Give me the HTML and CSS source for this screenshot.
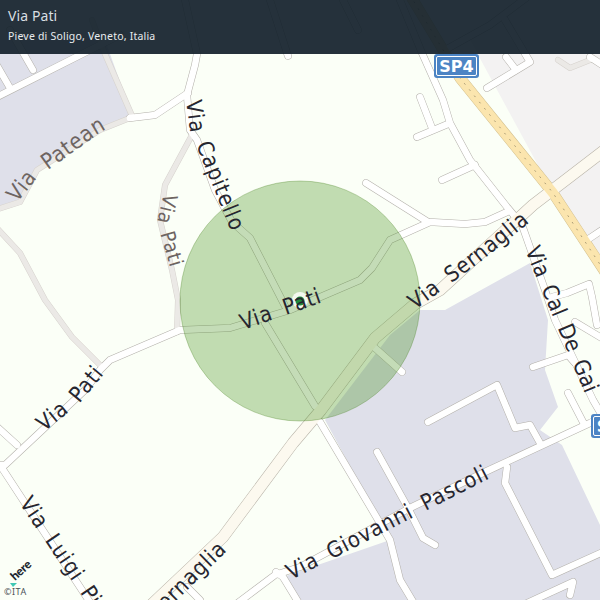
FILE: index.html
```html
<!DOCTYPE html>
<html lang="it">
<head>
    <meta charset="UTF-8">
    <meta name="viewport" content="width=device-width, initial-scale=1.0">
    <title>Via Pati</title>
    <link rel="stylesheet" href="styles.css">
</head>
<body>
    <div class="map-view">
        <svg class="map" viewBox="0 0 600 600" width="600" height="600">
            <defs>
                <!-- pale lanes -->
                <g id="pale-roads">
                    <path d="M-5,210 L20,202 L37,170 L100,130 L130,118"/>
                    <path d="M92,20 L105,54 L133,118"/>
                    <path d="M192,135 L165,185 L160,220 L172,270 L178,300 L177,332"/>
                    <path d="M-5,226 L20,253 L45,300 L72,337 L100,365"/>
                    <path d="M558,60 L570,68 L590,60"/>
                </g>
                <!-- white streets -->
                <g id="minor-roads">
                    <path d="M-5,98 L100,45 L120,35"/>
                    <path d="M10,30 L33,70"/>
                    <path d="M-5,62 L10,88"/>
                    <path d="M185,0 L197,54 L195,65 L187,95 L190,130 L197,140 L215,190 L232,222 L250,238 L285,306"/>
                    <path d="M130,118 L155,115 L188,93"/>
                    <path d="M-5,465 L5,465 L85,390 L100,370 L110,360 L180,330 L230,328 L290,310 L360,280 L372,268 L390,240 L430,222 L465,224 L485,222 L507,212"/>
                    <path d="M265,323 L315,406"/>
                    <path d="M-5,425 L17,445"/>
                    <path d="M2,468 L95,610"/>
                    <path d="M187,587 L200,600"/>
                    <path d="M400,0 L422,53 L443,100 L450,123 L470,160 L507,207 L522,225 L545,290 L555,320 L593,400 L600,412"/>
                    <path d="M420,97 L432,128"/>
                    <path d="M417,137 L448,124"/>
                    <path d="M442,180 L475,165"/>
                    <path d="M366,183 L428,222"/>
                    <path d="M270,0 L288,56"/>
                    <path d="M343,0 L358,30"/>
                    <path d="M487,88 L530,62 L505,20"/>
                    <path d="M506,57 L516,70"/>
                    <path d="M445,50 L490,25 L530,-5"/>
                    <path d="M590,57 L610,70"/>
                    <path d="M552,297 L567,293 L589,284 L592,297 L597,325"/>
                    <path d="M587,240 L605,228"/>
                    <path d="M575,322 L605,340"/>
                    <path d="M533,367 L568,355 L574,362"/>
                    <path d="M568,393 L583,422"/>
                    <path d="M540,443 L530,425 L515,428 L497,385 L428,422"/>
                    <path d="M610,413 L590,423 L487,471 L410,508 L300,567 L275,575 L235,605"/>
                    <path d="M377,452 L408,508 L423,538 L435,545"/>
                    <path d="M507,467 L505,483 L552,575 L605,551"/>
                    <path d="M320,422 L390,540 L400,580 L415,605"/>
                    <path d="M523,605 L573,582 L570,595"/>
                    <path d="M276,572 L283,577 L300,605"/>
                    <path d="M375,348 L402,372"/>
                </g>
                <g id="wide-roads">
                    <path d="M130,625 L223,537 L293,443 L321,410 L375,338 L415,304 L440,290 L533,205 L610,146"/>
                </g>
                <path id="sp4-road" d="M410,-5 L460,78 L553,193 L605,272"/>

                <path id="label-patean" d="M17,203 L37,178 L101,132 L125,118"/>
                <path id="label-capitello" d="M186,101 L190,130 L229,226 L240,255"/>
                <path id="label-pati-grey" d="M164,193 L157,222 L172,274 L178,300"/>
                <path id="label-pati-main" d="M243,330 L326,301 L350,292"/>
                <path id="label-pati-left" d="M44,432 L80,403 L105,373 L120,355"/>
                <path id="label-luigi" d="M19,503 L100,622"/>
                <path id="label-sernaglia-low" d="M124,652 L230,548 L250,528"/>
                <path id="label-sernaglia-up" d="M415,310 L480,262 L540,214 L565,194"/>
                <path id="label-cal" d="M525,250 L586,396 L596,420"/>
                <path id="label-pascoli" d="M291,580 L492,477 L520,463"/>
            </defs>

            <rect class="land" width="600" height="600"/>
            <polygon class="land-urban" points="0,40 105,40 133,118 100,130 37,170 20,202 0,208"/>
            <polygon class="land-urban" points="325,420 390,335 420,310 445,310 530,263 548,320 545,370 558,407 540,430 562,445 600,525 600,600 295,600 283,577 390,540"/>
            <polygon class="land-retail" points="470,40 600,40 600,262 553,193"/>

            <use href="#pale-roads" class="casing pale-casing"/>
            <use href="#minor-roads" class="casing minor-casing"/>
            <use href="#wide-roads" class="casing wide-casing"/>
            <use href="#sp4-road" class="casing sp4-casing"/>
            <use href="#pale-roads" class="road pale-road"/>
            <use href="#minor-roads" class="road minor-road"/>
            <use href="#wide-roads" class="road wide-road"/>
            <use href="#sp4-road" class="road sp4-road"/>
            <use href="#sp4-road" class="sp4-dots"/>

            <circle class="accuracy" cx="300" cy="301" r="120"/>
            <circle class="pin-halo" cx="300" cy="300" r="8"/>
            <circle class="pin" cx="300" cy="301" r="4.5"/>

            <text class="label label-dim"><textPath href="#label-patean">Via Patean</textPath></text>
            <text class="label label-dim small"><textPath href="#label-pati-grey">Via Pati</textPath></text>
            <text class="label"><textPath href="#label-capitello">Via Capitello</textPath></text>
            <text class="label"><textPath href="#label-pati-main">Via Pati</textPath></text>
            <text class="label"><textPath href="#label-pati-left">Via Pati</textPath></text>
            <text class="label"><textPath href="#label-luigi">Via Luigi Pi</textPath></text>
            <text class="label"><textPath href="#label-sernaglia-low">Via Sernaglia</textPath></text>
            <text class="label"><textPath href="#label-sernaglia-up">Via Sernaglia</textPath></text>
            <text class="label label-tight"><textPath href="#label-cal">Via Cal De Gai</textPath></text>
            <text class="label"><textPath href="#label-pascoli">Via Giovanni Pascoli</textPath></text>

            <!-- road shields -->
            <rect class="shield-edge" x="434" y="54" width="45" height="24" rx="3"/>
            <rect class="shield-face" x="436.500" y="56.500" width="40" height="19" rx="1.500"/>
            <text class="shield-text" x="456.500" y="72">SP4</text>
            <rect class="shield-edge" x="591" y="414" width="45" height="24" rx="3"/>
            <rect class="shield-face" x="593.500" y="416.500" width="40" height="19" rx="1.500"/>
            <text class="shield-text" x="614" y="432">SP4</text>

            <!-- map credit -->
            <polygon class="here-mark" points="10,583 17,583 13,587"/>
            <text class="here-logo" transform="translate(15 581) rotate(-42)">here</text>
            <text class="credit" x="4" y="595">©ITA</text>
        </svg>

        <div class="place-header">
            <div class="place-title">Via Pati</div>
            <div class="place-sub">Pieve di Soligo, Veneto, Italia</div>
        </div>
    </div>
</body>
</html>
```

FILE: styles.css
```css
body {
    margin: 0;
    background: #fbfff7;
}

.map-view {
    position: relative;
    width: 600px;
    height: 600px;
    overflow: hidden;
}

.map {
    display: block;
}

.land { fill: #fbfff7; }
.land-urban { fill: #dfe0ea; }
.land-retail { fill: #f3f2f2; }

.casing,
.road,
.sp4-dots {
    fill: none;
    stroke-linecap: round;
    stroke-linejoin: round;
}

.minor-casing { stroke: #b3b0aa; stroke-width: 7.500; }
.minor-road { stroke: #ffffff; stroke-width: 6.500; }
.pale-casing { stroke: #d6d2cd; stroke-width: 6; }
.pale-road { stroke: #ebe9e6; stroke-width: 5; }
.wide-casing { stroke: #b8b3a8; stroke-width: 12; }
.wide-road { stroke: #fcf9ef; stroke-width: 11; }
.sp4-casing { stroke: #d3c08f; stroke-width: 11; }
.sp4-road { stroke: #fbe5ae; stroke-width: 10; }
.sp4-dots { stroke: #a89a74; stroke-width: 1; stroke-dasharray: 1 7; }

.accuracy {
    fill: rgba(61, 138, 15, 0.3);
    stroke: rgba(61, 120, 15, 0.3);
    stroke-width: 1;
}

.pin-halo { fill: rgba(255, 255, 255, 0.8); }
.pin { fill: #1f8a3b; }

.label {
    font-family: "DejaVu Sans", sans-serif;
    font-size: 22px;
    font-stretch: condensed;
    letter-spacing: 0.8px;
    word-spacing: 5px;
    fill: #26262f;
}

.label-tight { letter-spacing: 0.2px; word-spacing: 4px; }
.label-dim { fill: #6d6461; }
.small { font-size: 20px; }

.shield-edge { fill: #4c84c4; }
.shield-face { fill: #4c84c4; stroke: #ffffff; stroke-width: 1; }

.shield-text {
    font-family: "DejaVu Sans", sans-serif;
    font-size: 16px;
    font-weight: bold;
    fill: #ffffff;
    text-anchor: middle;
}

.here-mark { fill: #3fc8b4; }

.here-logo {
    font-family: "Lato", sans-serif;
    font-size: 12px;
    font-weight: 900;
    letter-spacing: -0.3px;
    fill: #1d2730;
}

.credit {
    font-family: "Noto Sans", sans-serif;
    font-size: 9px;
    letter-spacing: 0.5px;
    fill: #4b5257;
}

.place-header {
    position: absolute;
    top: 0;
    left: 0;
    right: 0;
    height: 54px;
    box-sizing: border-box;
    padding: 7px 8px 0;
    background: rgba(18, 32, 42, 0.92);
    color: #e8ecee;
    font-family: "Noto Sans", sans-serif;
}

.place-title {
    font-size: 14px;
    line-height: 18px;
    letter-spacing: 0.1px;
    color: #d9dfe2;
}

.place-sub {
    margin-top: 3px;
    font-size: 10.500px;
    line-height: 16px;
    letter-spacing: 0.2px;
}
```
